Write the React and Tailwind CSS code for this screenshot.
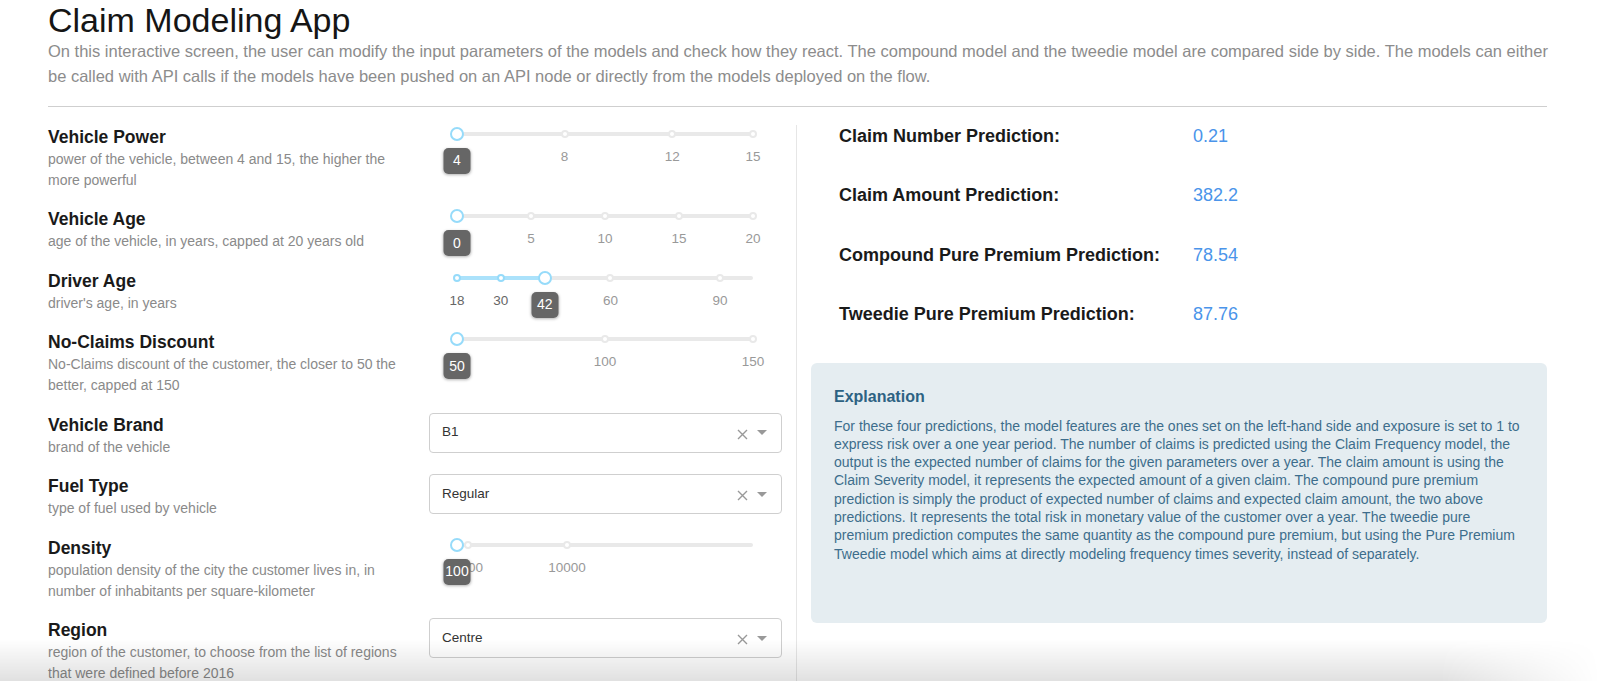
import React from "react";

const TRACK = 296;

function Slider({ min, max, value, marks, badge }) {
  const pct = (v) => (v - min) / (max - min);
  const vp = pct(value) * TRACK;
  return (
    <div className="relative ml-[28px] w-[296px] h-[45px]">
      <div className="absolute left-0 top-[7px] h-[4px] w-[296px] rounded-full bg-[#e9e9e9]" />
      <div
        className="absolute left-0 top-[7px] h-[4px] rounded-full bg-[#abe2fb]"
        style={{ width: vp }}
      />
      {marks.map((m) => {
        const x = (m.p !== undefined ? m.p : pct(m.v)) * TRACK;
        const active = m.v <= value;
        return (
          <React.Fragment key={m.v}>
            <div
              className={
                "absolute top-[5px] h-[8px] w-[8px] -translate-x-1/2 rounded-full border-2 bg-white " +
                (active ? "border-[#96dbfa]" : "border-[#e9e9e9]")
              }
              style={{ left: x }}
            />
            <div
              className={
                "absolute top-[24px] -translate-x-1/2 whitespace-nowrap text-[13.5px] leading-[16px] " +
                (active ? "text-[#666]" : "text-[#999]")
              }
              style={{ left: x }}
            >
              {m.label}
            </div>
          </React.Fragment>
        );
      })}
      <div
        className="absolute top-[2px] h-[14px] w-[14px] -translate-x-1/2 rounded-full border-2 border-[#96dbfa] bg-white"
        style={{ left: vp }}
      />
      <div
        className="absolute top-[23px] flex h-[26px] w-[27px] -translate-x-1/2 items-center justify-center rounded-[5px] bg-[#666] text-[14px] text-white shadow-[0_1px_3px_rgba(0,0,0,0.3)]"
        style={{ left: vp }}
      >
        {badge}
      </div>
    </div>
  );
}

function Select({ value }) {
  return (
    <div className="flex h-[40px] w-[353px] items-center rounded-[4px] border border-[#cfcfcf] bg-white pl-[12px] pr-[14px]">
      <span className="flex-1 text-[13.5px] text-[#333]">{value}</span>
      <svg width="11" height="11" viewBox="0 0 11 11" className="mr-[9px] mt-[3px]">
        <path d="M1 1 L10 10 M10 1 L1 10" stroke="#999" strokeWidth="1.4" />
      </svg>
      <div className="h-0 w-0 border-x-[5px] border-t-[5px] border-x-transparent border-t-[#999]" />
    </div>
  );
}

function Row({ label, desc, children }) {
  return (
    <div className="flex">
      <div className="w-[381px] shrink-0">
        <div className="text-[17.5px] font-semibold leading-[24px] text-[#1a1a1a]">{label}</div>
        <div className="pr-[20px] text-[14px] leading-[21px] text-[#8a8a8a]">{desc}</div>
      </div>
      <div className="w-[353px] shrink-0">{children}</div>
    </div>
  );
}

const preds = [
  ["Claim Number Prediction:", "0.21"],
  ["Claim Amount Prediction:", "382.2"],
  ["Compound Pure Premium Prediction:", "78.54"],
  ["Tweedie Pure Premium Prediction:", "87.76"],
];

export default function App() {
  return (
    <div className="relative h-[681px] w-[1600px] overflow-hidden bg-white font-['Liberation_Sans',Arial,sans-serif]">
      <div className="pl-[48px] pr-[53px]">
        <h1 className="pt-[2px] text-[34px] leading-[36px] text-[#151515]">Claim Modeling App</h1>
        <p className="mt-[1px] mr-[-8px] text-[16.5px] leading-[24.5px] text-[#8c8c8c]">
          On this interactive screen, the user can modify the input parameters of the models and check how they
          react. The compound model and the tweedie model are compared side by side. The models can either be called
          with API calls if the models have been pushed on an API node or directly from the models deployed on the
          flow.
        </p>
        <div className="mt-[18px] h-px bg-[#cfcfcf]" />

        <div className="mt-[17.5px] flex">
          <div className="flex w-[749px] shrink-0 flex-col gap-[16.5px] border-r border-[#e6e6e6] pr-[14px] h-[600px]">
            <Row
              label="Vehicle Power"
              desc="power of the vehicle, between 4 and 15, the higher the more powerful"
            >
              <Slider
                min={4}
                max={15}
                value={4}
                badge="4"
                marks={[
                  { v: 4, label: "" },
                  { v: 8, label: "8" },
                  { v: 12, label: "12" },
                  { v: 15, label: "15" },
                ]}
              />
            </Row>
            <Row label="Vehicle Age" desc="age of the vehicle, in years, capped at 20 years old">
              <Slider
                min={0}
                max={20}
                value={0}
                badge="0"
                marks={[
                  { v: 0, label: "" },
                  { v: 5, label: "5" },
                  { v: 10, label: "10" },
                  { v: 15, label: "15" },
                  { v: 20, label: "20" },
                ]}
              />
            </Row>
            <Row label="Driver Age" desc="driver's age, in years">
              <Slider
                min={18}
                max={99}
                value={42}
                badge="42"
                marks={[
                  { v: 18, label: "18" },
                  { v: 30, label: "30" },
                  { v: 60, label: "60" },
                  { v: 90, label: "90" },
                ]}
              />
            </Row>
            <Row
              label="No-Claims Discount"
              desc="No-Claims discount of the customer, the closer to 50 the better, capped at 150"
            >
              <Slider
                min={50}
                max={150}
                value={50}
                badge="50"
                marks={[
                  { v: 50, label: "" },
                  { v: 100, label: "100" },
                  { v: 150, label: "150" },
                ]}
              />
            </Row>
            <Row label="Vehicle Brand" desc="brand of the vehicle">
              <Select value="B1" />
            </Row>
            <Row label="Fuel Type" desc="type of fuel used by vehicle">
              <Select value="Regular" />
            </Row>
            <Row
              label="Density"
              desc="population density of the city the customer lives in, in number of inhabitants per square-kilometer"
            >
              <Slider
                min={100}
                max={26000}
                value={100}
                badge="100"
                marks={[
                  { v: 1000, p: 0.037, label: "1000" },
                  { v: 10000, p: 0.372, label: "10000" },
                ]}
              />
            </Row>
            <Row
              label="Region"
              desc="region of the customer, to choose from the list of regions that were defined before 2016"
            >
              <Select value="Centre" />
            </Row>
          </div>

          <div className="flex flex-1 flex-col gap-[36.5px] pl-[14px]">
            {preds.map(([l, v]) => (
              <div key={l} className="flex pl-[28px] text-[18px] leading-[23px]">
                <div className="w-[354px] font-semibold text-[#1a1a1a]">{l}</div>
                <div className="text-[#4a94ea]">{v}</div>
              </div>
            ))}
            <div className="h-[260px] rounded-[6px] bg-[#e5edf1] px-[23px] pt-[23px]">
              <div className="text-[16px] font-semibold leading-[22px] text-[#2d6283]">Explanation</div>
              <p className="mt-[9px] text-[14px] leading-[18.3px] text-[#3d6d8c]">
                For these four predictions, the model features are the ones set on the left-hand side and exposure
                is set to 1 to express risk over a one year period. The number of claims is predicted using the Claim
                Frequency model, the output is the expected number of claims for the given parameters over a year. The
                claim amount is using the Claim Severity model, it represents the expected amount of a given claim. The
                compound pure premium prediction is simply the product of expected number of claims and expected claim
                amount, the two above predictions. It represents the total risk in monetary value of the customer over
                a year. The tweedie pure premium prediction computes the same quantity as the compound pure premium,
                but using the Pure Premium Tweedie model which aims at directly modeling frequency times severity,
                instead of separately.
              </p>
            </div>
          </div>
        </div>
      </div>

      <div className="pointer-events-none absolute inset-x-0 bottom-0 h-[42px] bg-linear-to-b from-black/0 to-black/[0.12] [mask-image:linear-gradient(to_right,black_90%,transparent)]" />
    </div>
  );
}
